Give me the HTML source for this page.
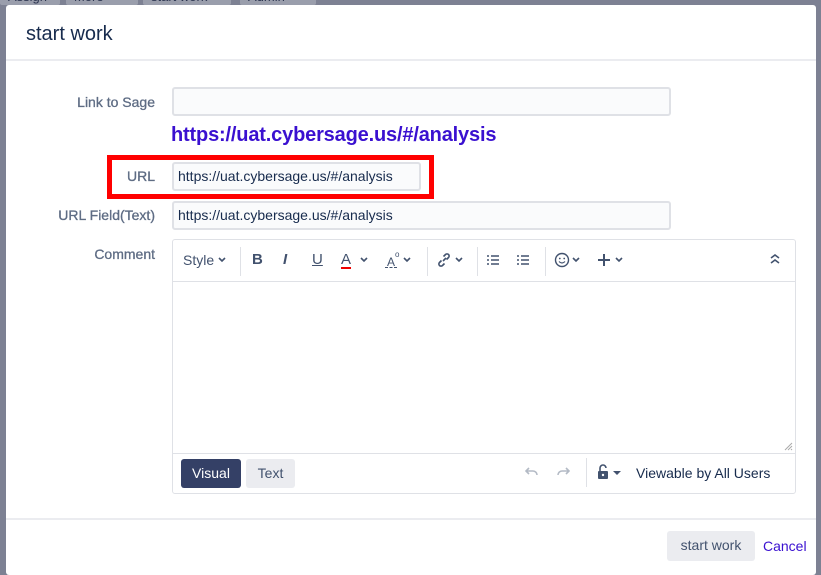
<!DOCTYPE html>
<html><head><meta charset="utf-8"><style>
*{box-sizing:border-box;margin:0;padding:0}
body{width:821px;height:563px;overflow:hidden;background:#7d8193;font-family:"Liberation Sans",sans-serif;position:relative;color:#172b4d}
.topbtn{position:absolute;top:-8px;height:13px;background:#9a9eac;border-radius:2px;font-size:13px;color:#2c3550;padding:0 8px;line-height:10px}
.dlg{position:absolute;left:6px;top:5px;width:810px;height:570px;background:#fff;border-radius:3px}
.hdr{position:absolute;left:0;top:0;width:810px;height:56px;border-bottom:2px solid #ebecf0}
.hdr h2{position:absolute;left:20px;top:18px;font-size:20px;font-weight:normal;color:#172b4d}
.lbl{position:absolute;right:661px;font-size:14px;color:#5e6c84;text-align:right;white-space:nowrap;-webkit-text-stroke:0.3px #5e6c84}
.inp{position:absolute;left:166px;height:29px;border:2px solid #dfe1e6;background:#fafbfc;border-radius:3px;font-size:14px;padding:4px 4px;color:#172b4d;white-space:nowrap}
.link{position:absolute;left:165px;top:119px;font-size:20px;font-weight:bold;color:#3a10d0;letter-spacing:-0.17px}
.red{position:absolute;left:101px;top:150px;width:327px;height:44px;border:5px solid #ff0000}
.ed{position:absolute;left:166px;top:234px;width:624px;height:255px;border:1px solid #dfe1e6;border-radius:3px}
.tb{position:absolute;left:0;top:0;width:622px;height:42px;border-bottom:1px solid #dfe1e6}
.ti{position:absolute;top:12px;font-size:15px;color:#42526e;line-height:16px}
.ic{position:absolute;top:13px}
.sep{position:absolute;top:7px;width:1px;height:29px;background:#dfe1e6}
.ft{position:absolute;left:0;top:213px;width:622px;height:40px;border-top:1px solid #dfe1e6}
.btn{position:absolute;border-radius:3px;font-size:14px;text-align:center;line-height:29px}
</style></head><body>
<div class="topbtn" style="left:0;width:60px">Assign</div>
<div class="topbtn" style="left:66px;width:72px">More</div>
<div class="topbtn" style="left:143px;width:88px">start work</div>
<div class="topbtn" style="left:240px;width:76px">Admin</div>
<div class="dlg">
 <div class="hdr"><h2>start work</h2></div>
 <div class="lbl" style="top:89px">Link to Sage</div>
 <div class="inp" style="top:82px;width:499px"></div>
 <div class="link">https://uat.cybersage.us/#/analysis</div>
 <div class="red"></div>
 <div class="lbl" style="top:163px">URL</div>
 <div class="inp" style="top:157px;width:249px">https://uat.cybersage.us/#/analysis</div>
 <div class="lbl" style="top:202px">URL Field(Text)</div>
 <div class="inp" style="top:196px;width:499px">https://uat.cybersage.us/#/analysis</div>
 <div class="lbl" style="top:241px">Comment</div>
 <div class="ed">
  <div class="tb">
   <div class="ti" style="left:10px;font-size:14px">Style</div>
   <svg class="ic" style="left:45px;top:17px" width="8" height="6"><path d="M1 1l3 3 3-3" stroke="#42526e" stroke-width="1.6" fill="none"/></svg>
   <div class="sep" style="left:67px"></div>
   <div class="ti" style="left:79px;font-weight:bold">B</div>
   <div class="ti" style="left:110px;font-style:italic;font-weight:bold">I</div>
   <div class="ti" style="left:139px;text-decoration:underline">U</div>
   <div class="ti" style="left:168px;border-bottom:2px solid #e00;line-height:15px">A</div>
   <svg class="ic" style="left:187px;top:17px" width="8" height="6"><path d="M1 1l3 3 3-3" stroke="#42526e" stroke-width="1.6" fill="none"/></svg>
   <div class="ti" style="left:214px;font-size:12px;top:14px">A</div>
   <div style="position:absolute;left:222px;top:10px;font-size:8px;color:#42526e">o</div>
   <div style="position:absolute;left:212px;top:27px;width:12px;border-top:1px dashed #42526e"></div>
   <svg class="ic" style="left:230px;top:17px" width="8" height="6"><path d="M1 1l3 3 3-3" stroke="#42526e" stroke-width="1.6" fill="none"/></svg>
   <div class="sep" style="left:254px"></div>
   <svg class="ic" style="left:263px;top:12px" width="16" height="16"><path d="M7 9l3-3M5.5 8.5l-2 2a2.1 2.1 0 0 0 3 3l2-2M10.5 7.5l2-2a2.1 2.1 0 0 0-3-3l-2 2" stroke="#42526e" stroke-width="1.6" fill="none"/></svg>
   <svg class="ic" style="left:282px;top:17px" width="8" height="6"><path d="M1 1l3 3 3-3" stroke="#42526e" stroke-width="1.6" fill="none"/></svg>
   <div class="sep" style="left:304px"></div>
   <svg class="ic" style="left:314px;top:14px" width="12" height="12"><path d="M0 2h2M4 2h8M0 6h2M4 6h8M0 10h2M4 10h8" stroke="#42526e" stroke-width="1.6"/></svg>
   <svg class="ic" style="left:344px;top:14px" width="12" height="12"><path d="M0 2h2M4 2h8M0 6h2M4 6h8M0 10h2M4 10h8" stroke="#42526e" stroke-width="1.6"/></svg>
   <div class="sep" style="left:372px"></div>
   <svg class="ic" style="left:381px;top:12px" width="16" height="16"><circle cx="8" cy="8" r="6.5" stroke="#42526e" stroke-width="1.4" fill="none"/><circle cx="5.8" cy="6.5" r="0.9" fill="#42526e"/><circle cx="10.2" cy="6.5" r="0.9" fill="#42526e"/><path d="M5 9.5q3 3 6 0" stroke="#42526e" stroke-width="1.2" fill="none"/></svg>
   <svg class="ic" style="left:399px;top:17px" width="8" height="6"><path d="M1 1l3 3 3-3" stroke="#42526e" stroke-width="1.6" fill="none"/></svg>
   <svg class="ic" style="left:424px;top:13px" width="14" height="14"><path d="M7 1v12M1 7h12" stroke="#42526e" stroke-width="2"/></svg>
   <svg class="ic" style="left:442px;top:17px" width="8" height="6"><path d="M1 1l3 3 3-3" stroke="#42526e" stroke-width="1.6" fill="none"/></svg>
   <svg class="ic" style="left:597px;top:13px" width="10" height="12"><path d="M1 5l4-3 4 3M1 10l4-3 4 3" stroke="#42526e" stroke-width="1.6" fill="none"/></svg>
  </div>
  <svg style="position:absolute;left:610px;top:201px" width="10" height="10"><path d="M9 2L2 9M9 5L5 9M9 8L8 9" stroke="#aaa" stroke-width="1"/></svg>
  <div class="ft">
   <div class="btn" style="left:8px;top:5px;width:60px;background:#344066;color:#fff">Visual</div>
   <div class="btn" style="left:73px;top:5px;width:49px;background:#ebecf0;color:#42526e">Text</div>
   <svg class="ic" style="left:352px;top:13px" width="14" height="10"><path d="M4 1L1 4l3 3M1 4h7a4 4 0 0 1 4 4" stroke="#b3bac5" stroke-width="1.6" fill="none"/></svg>
   <svg class="ic" style="left:383px;top:13px" width="14" height="10"><path d="M10 1l3 3-3 3M13 4H6a4 4 0 0 0-4 4" stroke="#b3bac5" stroke-width="1.6" fill="none"/></svg>
   <div class="sep" style="left:413px;top:4px"></div>
   <svg class="ic" style="left:424px;top:10px" width="12" height="16"><path d="M3 7V4a3 3 0 0 1 6 0" stroke="#42526e" stroke-width="1.6" fill="none"/><rect x="1" y="7" width="10" height="8" rx="1" fill="#42526e"/><circle cx="6" cy="11" r="1.2" fill="#fff"/></svg>
   <svg class="ic" style="left:440px;top:17px" width="8" height="5"><path d="M0 0h8L4 4z" fill="#42526e"/></svg>
   <div class="ti" style="left:463px;top:11px;font-size:14px;color:#172b4d">Viewable by All Users</div>
  </div>
 </div>
 <div style="position:absolute;left:0;top:513px;width:810px;height:2px;background:#ebecf0"></div>
 <div class="btn" style="left:661px;top:526px;width:88px;height:30px;background:#ebecf0;color:#42526e">start work</div>
 <div style="position:absolute;left:757px;top:533px;font-size:14px;color:#3a10d0">Cancel</div>
</div>
</body></html>
